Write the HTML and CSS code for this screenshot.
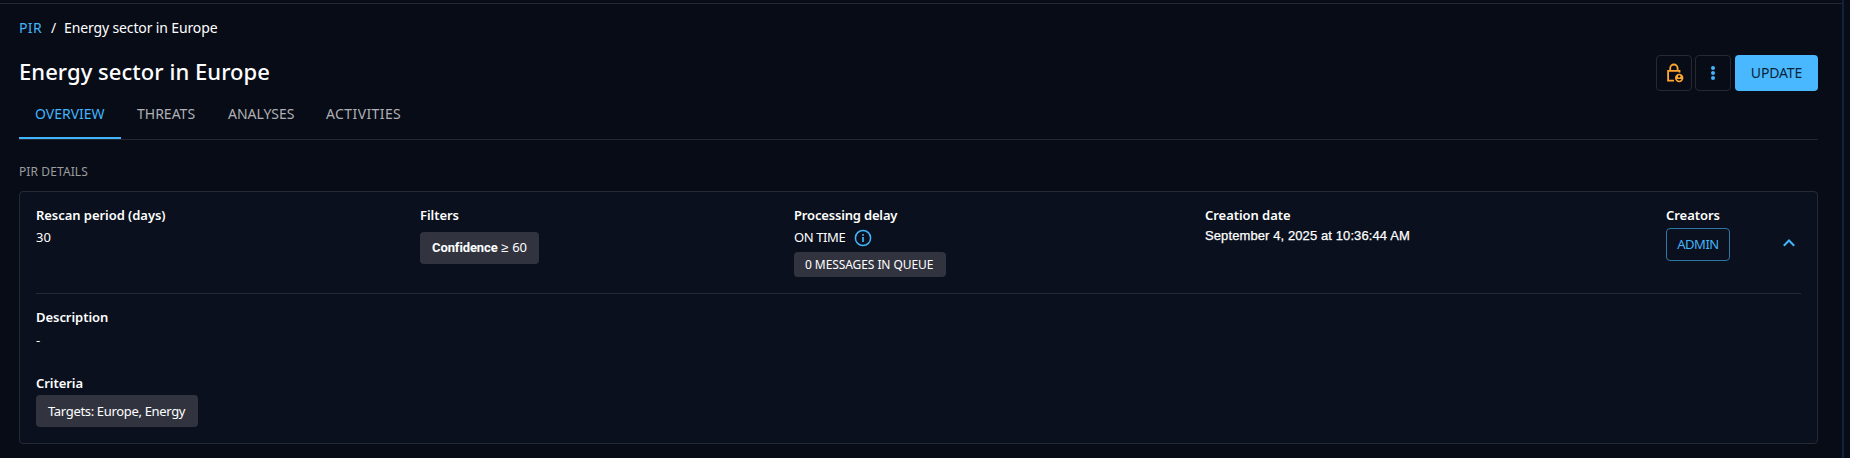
FILE: index.html
```
<!DOCTYPE html>
<html lang="en">
<head>
<meta charset="utf-8">
<title>Energy sector in Europe</title>
<link rel="stylesheet" href="styles.css">
</head>
<body>
<div class="app">
  <main class="page">
    <nav class="breadcrumb"><a class="crumb-link">PIR</a><span class="crumb-sep">/</span><span class="crumb-current">Energy sector in Europe</span></nav>
    <header class="header">
      <h1 class="title">Energy sector in Europe</h1>
      <div class="actions">
        <button class="icon-btn lock" aria-label="Authorized members">
          <svg width="18" height="20" viewBox="0 0 18 20" fill="none" stroke="#ffa630">
            <path d="M8 17.7H2.1V7.9H13.5V9.6" stroke-width="1.8"/>
            <path d="M4.2 7.6V5.2a3.7 3.7 0 0 1 7.4 0V7.6" stroke-width="1.8"/>
            <circle cx="13.2" cy="15" r="4.2" fill="#ffa630" stroke="none"/>
            <circle cx="13.2" cy="13.4" r="1.2" fill="#080c17" stroke="none"/>
            <path d="M10.8 16.1h4.8q-.8 1.7-2.4 1.7t-2.4-1.7z" fill="#080c17" stroke="none"/>
          </svg>
        </button>
        <button class="icon-btn" aria-label="More">
          <svg width="6" height="16" viewBox="0 0 6 16" fill="#42b4fb"><circle cx="3" cy="3" r="2"/><circle cx="3" cy="8" r="2"/><circle cx="3" cy="13" r="2"/></svg>
        </button>
        <button class="update"><span>UPDATE</span></button>
      </div>
    </header>
    <div class="tabs">
      <a class="tab active">OVERVIEW</a>
      <a class="tab threats">THREATS</a>
      <a class="tab analyses">ANALYSES</a>
      <a class="tab activities">ACTIVITIES</a>
    </div>
    <h2 class="section">PIR DETAILS</h2>
    <section class="card">
      <div class="facts">
        <div>
          <h3 class="label">Rescan period (days)</h3>
          <div class="value">30</div>
        </div>
        <div>
          <h3 class="label">Filters</h3>
          <div class="chip filter"><b class="filter-key">Confidence</b><span>≥</span><span>60</span></div>
        </div>
        <div>
          <h3 class="label tight">Processing delay</h3>
          <div class="value delay"><span class="ontime">ON TIME</span>
            <svg width="18" height="18" viewBox="0 0 18 18" fill="none" stroke="#42b4fb"><circle cx="9" cy="9" r="7.6" stroke-width="1.5"/><path d="M9 8v5M9 5v1.7" stroke-width="1.7"/></svg>
          </div>
          <div class="chip queue">0 MESSAGES IN QUEUE</div>
        </div>
        <div>
          <h3 class="label">Creation date</h3>
          <div class="date">September 4, 2025 at 10:36:44 AM</div>
        </div>
        <div>
          <h3 class="label">Creators</h3>
          <button class="creator">ADMIN</button>
        </div>
        <svg class="chevron" width="14" height="10" viewBox="0 0 14 10" fill="none" stroke="#42b4fb" stroke-width="2"><path d="M1.8 7.7L7 2.5l5.2 5.2"/></svg>
      </div>
      <div class="more">
        <h3 class="label">Description</h3>
        <div class="value dash">-</div>
        <h3 class="label">Criteria</h3>
        <div class="chip criteria">Targets: Europe, Energy</div>
      </div>
    </section>
  </main>
</div>
</body>
</html>
```
FILE: styles.css
```
* { box-sizing: border-box; }
body {
  margin: 0;
  background: #080c17;
  color: #fff;
  font-family: "Noto Sans", sans-serif;
  font-size: 14px;
}
h1, h2, h3 { margin: 0; }
button { font: inherit; background: none; padding: 0; }
svg { display: block; }
.app {
  width: 1844px;
  height: 458px;
  padding-top: 3px;
  border-right: 2px solid #13203b;
  overflow: hidden;
}
.page {
  height: 455px;
  border-top: 1px solid #252831;
  padding: 14px 24px 0 19px;
}
.breadcrumb { display: flex; height: 20px; line-height: 20px; }
.crumb-link { width: 32px; color: #42b4fb; letter-spacing: .4px; }
.crumb-sep { width: 13px; }
.crumb-current { letter-spacing: -.13px; }
.header {
  display: flex;
  justify-content: space-between;
  height: 36px;
  margin-top: 17px;
}
.title { font-size: 22px; font-weight: 500; line-height: 32px; letter-spacing: .05px; }
.actions { display: flex; }
.icon-btn {
  display: flex;
  align-items: center;
  justify-content: center;
  width: 36px;
  height: 36px;
  margin-right: 3px;
  border: 1px solid #262931;
  border-radius: 4px;
}
.icon-btn.lock { padding-left: 2px; }
.icon-btn + .update { margin-left: 1px; }
.update {
  width: 83px;
  height: 36px;
  padding-bottom: 2px;
  border: 0;
  border-radius: 4px;
  background: #49b8fe;
  color: #09253b;
  letter-spacing: -.15px;
}
.tabs {
  display: flex;
  height: 49px;
  border-bottom: 1px solid #252831;
}
.tab {
  height: 48px;
  line-height: 46px;
  color: #afb0b4;
  padding: 0 16px;
}
.tab.active { width: 102px; color: #42b4fb; border-bottom: 2px solid #42b4fb; }
.tab.threats { width: 91px; }
.tab.analyses { width: 98px; }
.tab.activities { letter-spacing: .4px; }
.section {
  height: 20px;
  margin-top: 21px;
  font-size: 12px;
  font-weight: 400;
  line-height: 22px;
  letter-spacing: .1px;
  color: #9b9c9f;
}
.card {
  height: 253px;
  margin-top: 10px;
  padding: 14px 16px 0;
  border: 1px solid #262a34;
  border-radius: 4px;
  background: #0a101d;
}
.facts {
  display: grid;
  grid-template-columns: 384px 374px 411px 461px 1fr 20px;
  height: 88px;
  border-bottom: 1px solid #262a34;
}
.label { height: 20px; font-size: 13px; font-weight: 600; line-height: 18px; letter-spacing: -.05px; }
.label.tight { letter-spacing: -.17px; }
.value { height: 20px; margin-top: 2px; font-size: 13px; line-height: 18px; }
.delay { display: flex; gap: 9px; }
.delay svg { margin-top: 1px; }
.ontime { width: 51px; letter-spacing: -.4px; white-space: nowrap; }
.date { font: 13px/20px "Liberation Sans", Arial, sans-serif; letter-spacing: .1px; -webkit-text-stroke: .25px #fff; }
.chip {
  width: max-content;
  border-radius: 4px;
  background: #31343f;
  white-space: nowrap;
}
.filter {
  display: flex;
  gap: 4px;
  width: 119px;
  height: 32px;
  margin-top: 6px;
  padding-left: 12px;
  font-size: 13px;
  line-height: 31px;
}
.filter-key { font-family: Roboto, sans-serif; width: 65px; letter-spacing: -.1px; }
.queue { width: 152px; height: 25px; margin-top: 4px; padding-left: 11px; font-size: 12px; line-height: 25px; letter-spacing: -.08px; }
.creator {
  width: 64px;
  height: 33px;
  margin-top: 2px;
  padding-bottom: 2px;
  border: 1px solid #2d76a6;
  border-radius: 4px;
  color: #42b4fb;
  font-size: 13px;
  letter-spacing: -.45px;
  display: block;
}
.chevron { margin-top: 32px; margin-left: 1px; }
.more { padding-top: 14px; }
.dash { margin: 3px 0 23px; }
.criteria { width: 162px; height: 32px; margin-top: 1px; padding-left: 12px; font-size: 13px; line-height: 33px; letter-spacing: -.33px; }
```
